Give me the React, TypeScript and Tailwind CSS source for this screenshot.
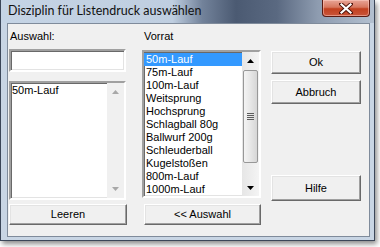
import React from 'react';

const vorrat = [
  '50m-Lauf',
  '75m-Lauf',
  '100m-Lauf',
  'Weitsprung',
  'Hochsprung',
  'Schlagball 80g',
  'Ballwurf 200g',
  'Schleuderball',
  'Kugelstoßen',
  '800m-Lauf',
  '1000m-Lauf',
  '2000m-Lauf',
];

const sunken =
  'border-2 border-t-[#a0a0a0] border-l-[#a0a0a0] border-b-white border-r-white shadow-[inset_1px_1px_0_#696969,inset_-1px_-1px_0_#e3e3e3]';

function Button({ label, className = '' }: { label: string; className?: string }) {
  return (
    <div
      className={`flex items-center justify-center bg-[#f0f0f0] border border-t-white border-l-white border-b-[#696969] border-r-[#696969] shadow-[inset_-1px_-1px_0_#a0a0a0,inset_1px_1px_0_#e3e3e3] text-[11px] text-black ${className}`}
    >
      {label}
    </div>
  );
}

function Arrow({ up, color }: { up?: boolean; color: string }) {
  return (
    <svg width="7" height="4" viewBox="0 0 7 4" className="block">
      {up ? <path d="M0 4 L3.5 0 L7 4 Z" fill={color} /> : <path d="M0 0 L3.5 4 L7 0 Z" fill={color} />}
    </svg>
  );
}

function CloseButton() {
  return (
    <div className="mr-[4px] w-[48px] h-[17px] rounded-b-[4px] border border-t-0 border-[#5a1a12] bg-[linear-gradient(180deg,#e8a597_0%,#d7775f_45%,#c2401f_55%,#c9553a_100%)] shadow-[inset_0_0_0_1px_rgba(255,210,200,0.5)] flex items-center justify-center">
      <svg width="14" height="11" viewBox="0 0 14 11">
        <path d="M2 1 L12 10 M12 1 L2 10" stroke="#4a1008" strokeWidth="4" strokeLinecap="round" />
        <path d="M2.5 1.5 L11.5 9.5 M11.5 1.5 L2.5 9.5" stroke="#ffffff" strokeWidth="2.2" strokeLinecap="square" />
      </svg>
    </div>
  );
}

export default function App() {
  return (
    <div className="w-[380px] h-[247px] bg-white" style={{ fontFamily: '"Liberation Sans", Arial, sans-serif' }}>
      <div className="w-[375px] h-[241px] flex flex-col border border-t-0 border-[#3b4658] bg-[#c8d5e4] shadow-[2px_3px_5px_rgba(0,0,0,0.45)]">
        {/* title bar */}
        <div className="h-[23px] flex items-start justify-between bg-[linear-gradient(90deg,#c5d4e5_0%,#bfcee0_46%,#72829a_54%,#4b5a72_63%,#5a6981_74%,#8e9cb0_85%,#b3c0d0_100%)]">
          <span
            className="pl-[7px] pt-[3px] text-[12.5px] leading-[15px] text-[#111]"
            style={{ fontFamily: 'Lato, "Noto Sans", sans-serif' }}
          >
            Disziplin für Listendruck auswählen
          </span>
          <CloseButton />
        </div>

        {/* client area */}
        <div className="flex-1 ml-[6px] mr-[4px] mb-[3px] border border-[#7f8b9b] bg-[#f0f0f0] flex pl-[1px] text-[11px] text-black">
          {/* Auswahl column */}
          <div className="w-[118px] flex flex-col">
            <div className="h-[25px] pt-[6px] pl-[1px] leading-[13px]">Auswahl:</div>
            <div className={`h-[23px] w-[117px] bg-white ${sunken}`} />
            <div className={`mt-[9px] h-[119px] w-[117px] bg-white flex ${sunken}`}>
              <div className="flex-1 pl-[1px] pt-[1px] leading-[13px]">50m-Lauf</div>
              <div className="w-[17px] bg-[#f0f0f0] flex flex-col items-center justify-between py-[7px]">
                <Arrow up color="#a8a8a8" />
                <Arrow color="#a8a8a8" />
              </div>
            </div>
            <Button label="Leeren" className="mt-[4px] h-[21px] w-[118px]" />
          </div>

          {/* Vorrat column */}
          <div className="ml-[15px] w-[119px] flex flex-col">
            <div className="h-[26px] pt-[6px] pl-[2px] leading-[13px]">Vorrat</div>
            <div className={`h-[148px] w-[119px] bg-white flex overflow-hidden ${sunken}`}>
              <div className="flex-1 pt-[1px] overflow-hidden">
                {vorrat.map((v, i) => (
                  <div
                    key={v}
                    className={`h-[13px] leading-[13px] pl-[2px] whitespace-nowrap ${i === 0 ? 'bg-[#3399ff] text-white' : ''}`}
                  >
                    {v}
                  </div>
                ))}
              </div>
              <div className="w-[17px] bg-[linear-gradient(90deg,#e6e6e6,#f4f4f4)] flex flex-col items-center">
                <div className="h-[17px] flex items-center justify-center">
                  <Arrow up color="#000" />
                </div>
                <div className="mt-[1px] h-[93px] w-[15px] rounded-[2px] border border-[#989898] bg-[linear-gradient(90deg,#f4f4f4,#e8e8e8_45%,#d6d6d6)] flex flex-col items-center justify-center gap-[1px]">
                  <div className="w-[7px] h-[1px] bg-[#5c5c5c]" />
                  <div className="w-[7px] h-[1px] bg-[#5c5c5c]" />
                  <div className="w-[7px] h-[1px] bg-[#5c5c5c]" />
                  <div className="w-[7px] h-[1px] bg-[#5c5c5c]" />
                </div>
                <div className="flex-1" />
                <div className="h-[17px] flex items-center justify-center">
                  <Arrow color="#000" />
                </div>
              </div>
            </div>
            <Button label="<< Auswahl" className="mt-[6px] ml-[2px] h-[21px] w-[117px]" />
          </div>

          {/* buttons column */}
          <div className="ml-[10px] w-[90px] flex flex-col pt-[27px]">
            <Button label="Ok" className="h-[23px]" />
            <Button label="Abbruch" className="mt-[6px] h-[24px]" />
            <Button label="Hilfe" className="mt-[71px] h-[26px]" />
          </div>
        </div>
      </div>
    </div>
  );
}
